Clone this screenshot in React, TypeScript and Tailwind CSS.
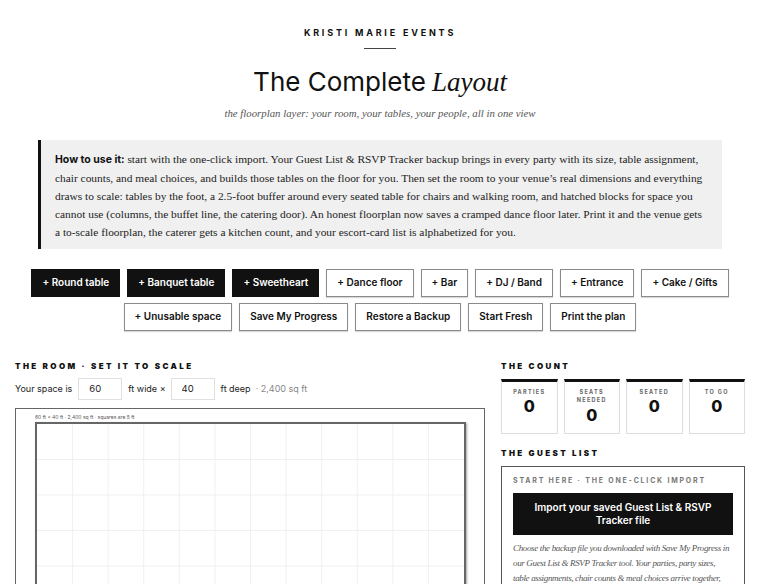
import React from "react"

const SANS = { fontFamily: "Inter, 'Noto Sans', sans-serif" }
const SERIF = { fontFamily: "'Liberation Serif', 'DejaVu Serif', serif" }

const dark = ["+ Round table", "+ Banquet table", "+ Sweetheart"]
const light1 = ["+ Dance floor", "+ Bar", "+ DJ / Band", "+ Entrance", "+ Cake / Gifts"]
const light2 = ["+ Unusable space", "Save My Progress", "Restore a Backup", "Start Fresh", "Print the plan"]

const stats = [
  { label: "PARTIES", value: "0" },
  { label: "SEATS NEEDED", value: "0" },
  { label: "SEATED", value: "0" },
  { label: "TO GO", value: "0" },
]

function Btn({ label, darkStyle }: { label: string; darkStyle?: boolean }) {
  return (
    <button
      className={
        darkStyle
          ? "h-[28px] border border-[#111] bg-[#111] px-[10px] text-[10px] font-semibold text-white"
          : "h-[28px] border border-[#8a8a8a] bg-white px-[10px] text-[10px] font-semibold text-[#111] shadow-[0_1px_1px_rgba(0,0,0,0.15)]"
      }
      style={SANS}
    >
      {label}
    </button>
  )
}

function Grid() {
  const cols = 12
  const rows = 8
  const w = 430
  const h = 287
  return (
    <svg width="100%" height="100%" viewBox={`0 0 ${w} ${h}`} preserveAspectRatio="none" className="block">
      {Array.from({ length: cols - 1 }, (_, i) => (
        <line key={"v" + i} x1={((i + 1) * w) / cols} y1={0} x2={((i + 1) * w) / cols} y2={h} stroke="#f0f0f0" strokeWidth={1} />
      ))}
      {Array.from({ length: rows - 1 }, (_, i) => (
        <line key={"h" + i} x1={0} y1={((i + 1) * h) / rows} x2={w} y2={((i + 1) * h) / rows} stroke="#f0f0f0" strokeWidth={1} />
      ))}
    </svg>
  )
}

export default function App() {
  return (
    <div className="min-h-screen w-full bg-white text-[#111]" style={SANS}>
      <header className="flex flex-col items-center pt-[26px]">
        <div className="text-[9px] font-bold tracking-[2.8px] text-[#111]">KRISTI MARIE EVENTS</div>
        <div className="mt-[8px] h-px w-[32px] bg-[#444]" />
        <h1 className="mt-[20px] flex items-baseline gap-[6px] text-[26px] leading-none font-normal text-[#111]">
          <span>The Complete</span>
          <span className="text-[27px] italic" style={SERIF}>Layout</span>
        </h1>
        <p className="mt-[9px] text-[10.8px] italic text-[#555]" style={SERIF}>
          the floorplan layer: your room, your tables, your people, all in one view
        </p>
      </header>

      <div className="mx-[38px] mt-[19px] border-l-[3px] border-[#111] bg-[#f0f0f0] pt-[10px] pr-[14px] pb-[8px] pl-[14px]">
        <p className="text-[11.4px] leading-[18px] text-[#222]" style={SERIF}>
          <span className="text-[10.5px] font-bold text-[#111]" style={SANS}>How to use it:</span> start with the
          one-click import. Your Guest List &amp; RSVP Tracker backup brings in every party with its size, table
          assignment, chair counts, and meal choices, and builds those tables on the floor for you. Then set the room to
          your venue’s real dimensions and everything draws to scale: tables by the foot, a 2.5-foot buffer around every
          seated table for chairs and walking room, and hatched blocks for space you cannot use (columns, the buffet
          line, the catering door). An honest floorplan now saves a cramped dance floor later. Print it and the venue
          gets a to-scale floorplan, the caterer gets a kitchen count, and your escort-card list is alphabetized for
          you.
        </p>
      </div>

      <div className="mt-[20px] flex flex-col items-center gap-[6px] px-[15px]">
        <div className="flex flex-wrap justify-center gap-[7px]">
          {dark.map((b) => (
            <Btn key={b} label={b} darkStyle />
          ))}
          {light1.map((b) => (
            <Btn key={b} label={b} />
          ))}
        </div>
        <div className="flex flex-wrap justify-center gap-[7px]">
          {light2.map((b) => (
            <Btn key={b} label={b} />
          ))}
        </div>
      </div>

      <div className="mt-[29px] flex gap-[16px] px-[15px]">
        <section className="w-[470px] shrink-0">
          <h2 className="text-[8px] font-black tracking-[2.4px] text-[#111]">THE ROOM · SET IT TO SCALE</h2>
          <div className="mt-[6px] flex items-center text-[9px] text-[#222]">
            <span>Your space is</span>
            <input
              defaultValue="60"
              className="ml-[6px] h-[22px] w-[44px] border border-[#e0e0e0] px-[10px] text-[9.5px] outline-none"
              style={SANS}
            />
            <span className="ml-[6px]">ft wide ×</span>
            <input
              defaultValue="40"
              className="ml-[5px] h-[22px] w-[44px] border border-[#e0e0e0] px-[10px] text-[9.5px] outline-none"
              style={SANS}
            />
            <span className="ml-[6px]">ft deep</span>
            <span className="ml-[5px] text-[#888]">· 2,400 sq ft</span>
          </div>
          <div className="mt-[8px] border-[1.5px] border-[#666] bg-white pt-[4px] pr-[18px] pb-[20px] pl-[19px]">
            <div className="text-[5px] leading-[9px] text-[#555]">60 ft × 40 ft · 2,400 sq ft · squares are 5 ft</div>
            <div className="h-[288px] w-full border-2 border-[#666] shadow-[1px_1px_2px_rgba(0,0,0,0.35)]">
              <Grid />
            </div>
          </div>
        </section>

        <aside className="w-[244px] shrink-0">
          <h2 className="text-[8px] font-black tracking-[2.4px] text-[#111]">THE COUNT</h2>
          <div className="mt-[7px] grid grid-cols-4 gap-[6px]">
            {stats.map((s) => (
              <div
                key={s.label}
                className="flex h-[55px] flex-col items-center border border-t-[3px] border-[#ddd] border-t-[#111] bg-white pt-[6px]"
              >
                <div className="w-[40px] text-center text-[5.5px] leading-[8.5px] font-bold tracking-[1.3px] text-[#666]">
                  {s.label}
                </div>
                <div className="mt-[1px] text-[16px] leading-[18px] font-extrabold text-[#111]">{s.value}</div>
              </div>
            ))}
          </div>

          <h2 className="mt-[13px] text-[8px] font-black tracking-[2.4px] text-[#111]">THE GUEST LIST</h2>
          <div className="mt-[7px] border border-[#555] bg-white px-[11px] pt-[9px] pb-[10px]">
            <div className="text-[7px] font-bold tracking-[1.8px] text-[#777]">START HERE · THE ONE-CLICK IMPORT</div>
            <button className="mt-[7px] flex h-[42px] w-full items-center justify-center bg-[#111] px-[16px] text-center text-[10px] leading-[13px] font-semibold text-white">
              Import your saved Guest List &amp; RSVP Tracker file
            </button>
            <p className="mt-[6px] text-[9px] leading-[15px] tracking-[-0.35px] italic text-[#555]" style={SERIF}>
              Choose the backup file you downloaded with Save My Progress in our Guest List &amp; RSVP Tracker tool. Your
              parties, party sizes, table assignments, chair counts &amp; meal choices arrive together, and build the
              floorplan tables for you.
            </p>
          </div>
        </aside>
      </div>
    </div>
  )
}
